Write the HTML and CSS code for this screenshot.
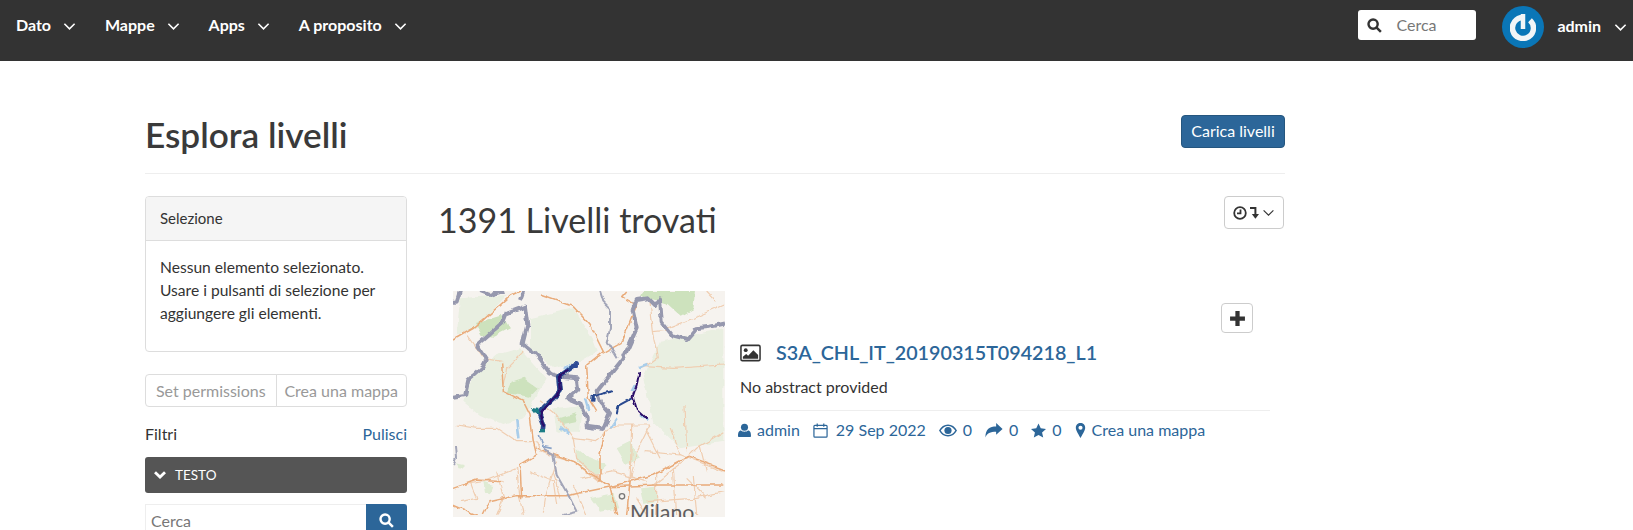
FILE: index.html

```html
<!DOCTYPE html>
<html lang="it">
<head>
    <meta charset="UTF-8">
    <meta name="viewport" content="width=device-width, initial-scale=1.0">
    <title>Esplora livelli</title>
    <link rel="stylesheet" href="styles.css">
</head>
<body>
    <nav class="topbar">
        <ul class="menu">
            <li>Dato <svg class="chev" viewBox="0 0 14 9"><path d="M1.500 1.500 7 7l5.500-5.500"/></svg></li>
            <li>Mappe <svg class="chev" viewBox="0 0 14 9"><path d="M1.500 1.500 7 7l5.500-5.500"/></svg></li>
            <li>Apps <svg class="chev" viewBox="0 0 14 9"><path d="M1.500 1.500 7 7l5.500-5.500"/></svg></li>
            <li>A proposito <svg class="chev" viewBox="0 0 14 9"><path d="M1.500 1.500 7 7l5.500-5.500"/></svg></li>
        </ul>
        <div class="top-search">
            <svg class="search-icon dark" viewBox="0 0 16 16"><circle cx="6.500" cy="6.500" r="4.900"/><path d="m10 10 4.800 4.800"/></svg>
            <span>Cerca</span>
        </div>
        <svg class="avatar" viewBox="0 0 42 42">
            <defs><filter id="soft"><feGaussianBlur stdDeviation="0.600"/></filter></defs>
            <circle cx="21" cy="21" r="21" fill="#0a76b7"/>
            <g fill="none" stroke="#f2f5f7" filter="url(#soft)">
                <path stroke-width="5.500" d="M21 11.500a10.500 10.500 0 1 0 7 2.700"/>
                <path stroke-width="4.500" d="M21 8v15"/>
            </g>
        </svg>
        <div class="user">admin <svg class="chev" viewBox="0 0 14 9"><path d="M1.500 1.500 7 7l5.500-5.500"/></svg></div>
    </nav>

    <div class="container">
        <header class="page-head">
            <h1>Esplora livelli</h1>
            <a class="btn-upload">Carica livelli</a>
        </header>

        <div class="columns">
            <aside class="sidebar">
                <div class="panel">
                    <div class="panel-head">Selezione</div>
                    <div class="panel-body">Nessun elemento selezionato. Usare i pulsanti di selezione per aggiungere gli elementi.</div>
                </div>
                <div class="btn-pair">
                    <span>Set permissions</span>
                    <span>Crea una mappa</span>
                </div>
                <div class="filter-head">
                    <span>Filtri</span>
                    <a>Pulisci</a>
                </div>
                <div class="filter-bar">
                    <svg viewBox="0 0 14 10"><path d="M2 2.200 7 7l5-4.800"/></svg>
                    TESTO
                </div>
                <div class="side-search">
                    <span>Cerca</span>
                    <div class="side-search-btn">
                        <svg class="search-icon" viewBox="0 0 16 16"><circle cx="6.500" cy="6.500" r="4.900"/><path d="m10 10 4.800 4.800"/></svg>
                    </div>
                </div>
            </aside>

            <main class="results">
                <div class="results-head">
                    <h2>1391 Livelli trovati</h2>
                    <div class="sort-btn">
                        <svg class="sort-clock" viewBox="0 0 14 14"><circle cx="7" cy="7" r="5.800"/><path d="M7.500 3.500v3.800H4"/></svg>
                        <svg class="sort-arrow" viewBox="0 0 10 14"><path d="M0 1.500h6v7"/><path class="tip" d="M2 8h8l-4 5.500z"/></svg>
                        <svg class="chev-thin" viewBox="0 0 14 9"><path d="M1.500 1.500 7 7l5.500-5.500"/></svg>
                    </div>
                </div>

                <article class="item">
                    <div class="thumb">
                        <svg viewBox="39 18 816 678" preserveAspectRatio="none">
                            <defs>
                                <filter id="rough" x="0" y="0" width="100%" height="100%">
                                    <feTurbulence type="fractalNoise" baseFrequency="0.035" numOctaves="2" seed="4"/>
                                    <feDisplacementMap in="SourceGraphic" scale="16" xChannelSelector="R" yChannelSelector="G"/>
                                    <feGaussianBlur stdDeviation="2"/>
                                </filter>
                            </defs>
                            <rect x="39" y="18" width="816" height="678" fill="#f6f3ef"/>
                            <g filter="url(#rough)">
                                <!-- pale woods -->
                                <g fill="#e9efe1">
                                    <path d="M270 100 400 70 455 160 470 200 420 230 340 250 270 190z"/>
                                    <path d="M660 170 760 150 850 130 850 470 720 490 640 410 610 280z"/>
                                    <path d="M100 270 170 210 240 190 320 280 290 330 250 400 190 420 120 390 70 350z"/>
                                    <path d="M340 370 430 360 420 440 350 440z"/>
                                    <path d="M60 40 200 30 110 130 50 150z"/>
                                </g>
                                <g fill="#dfeBd3">
                                    <path d="M410 490 450 520 500 540 470 570 410 530z"/>
                                    <path d="M530 490 570 470 600 520 560 540z"/>
                                    <path d="M450 640 520 625 535 670 480 680z"/>
                                    <path d="M600 610 650 605 650 650 610 660z"/>
                                    <path d="M130 590 160 600 150 625 135 620z"/>
                                    <path d="M45 535 75 540 60 555z"/>
                                </g>
                                <g fill="#cde2bd">
                                    <path d="M105 115 185 90 210 130 160 155 125 150z"/>
                                    <path d="M215 290 250 278 295 310 270 335 200 325z"/>
                                    <path d="M358 400 405 385 410 412 370 420z"/>
                                    <path d="M610 18 765 18 760 75 725 95 680 55 600 32z"/>
                                </g>
                                <!-- roads -->
                                <g fill="none" stroke="#f0cdb0" stroke-width="3.500">
                                    <path d="M50 420 110 430 170 430 230 470 290 470 300 500"/>
                                    <path d="M400 460 410 520 500 600M480 520 480 590M575 420 570 600M630 420 590 500 570 590M495 440 530 420 630 420"/>
                                    <path d="M735 360 740 500M850 440 770 490 740 520 640 600M620 500 720 510 850 560M690 430 720 510"/>
                                    <path d="M60 600 130 590 230 550 240 640 250 690M650 560 650 690M700 550 710 690M760 570 770 690"/>
                                    <path d="M300 500 400 530 480 590M340 560 360 640M400 600 440 690M350 530 320 620 310 680"/>
                                    <path d="M640 140 655 215 610 250M610 245 700 250 850 240M630 50 640 140 690 135M80 150 130 220 190 230"/>
                                    <path d="M400 460 470 470 495 440M420 580 520 560 620 590M620 650 760 640 850 620M90 590 110 640 60 650"/>
                                    <path d="M680 130 760 100 850 60M800 18 830 50M250 200 200 250 190 300M300 350 340 380 400 460M620 440 660 520M780 480 800 560"/>
                                    <path d="M170 560 190 640 170 690M270 560 340 590 350 660M590 640 620 690M740 580 800 640"/>
                                </g>
                                <g fill="none" stroke="#e9ab7a" stroke-width="4.500">
                                    <path d="M39 165 100 130 215 30 240 18"/>
                                    <path d="M300 30 400 65 450 120 490 200 440 240 445 340 470 380"/>
                                    <path d="M490 205 545 175 590 60 545 35 560 18"/>
                                    <path d="M185 235 190 320 250 350 270 390 280 470 290 510 240 540 245 640"/>
                                    <path d="M290 490 400 530 510 605"/>
                                    <path d="M130 690 150 650 230 632 380 632 510 605 640 570 745 515 855 555"/>
                                    <path d="M39 660 110 690M39 610 110 585 190 590M510 605 530 690M570 590 560 690"/>
                                    <path d="M510 605 650 600 850 600M495 440 480 510 480 590"/>
                                </g>
                                <!-- borders -->
                                <g fill="none" stroke="#9698ae" stroke-width="12" stroke-linejoin="round">
                                    <path d="M39 335 75 330 85 285 130 245 140 225 110 180 190 110 200 85 255 65 262 120 248 175 285 205 330 265 360 275 410 280 415 315 385 340 420 355 440 400 440 425 490 432 510 385 480 350 470 320 510 270 550 220 590 130 578 75 590 45 625 40 645 60 660 40 665 110 700 155 740 165 770 130 810 125 855 115"/>
                                    <path d="M120 18 150 30 190 18M250 18 240 45M60 18 50 50 39 50"/>
                                </g>
                                <g fill="none" stroke="#a2a5b8" stroke-width="6" stroke-linejoin="round">
                                    <path d="M480 18 490 50 510 70 510 130 500 170 530 220"/>
                                    <path d="M45 480 48 520 39 540"/>
                                    <path d="M310 490 340 510 350 570 390 640 410 680 370 690"/>
                                </g>
                                <!-- lakes and raster -->
                                <g fill="none" stroke="#a9cdea" stroke-width="8">
                                    <path d="M232 405 238 460"/>
                                    <path d="M360 425 385 445"/>
                                    <path d="M370 250 395 240"/>
                                    <path d="M600 250 625 240"/>
                                    <path d="M575 320 585 300M435 340 445 375"/>
                                    <path d="M510 430 530 400M600 390 625 408"/>
                                </g>
                                <g fill="none" stroke="#29498f" stroke-width="14" stroke-linejoin="round">
                                    <path d="M405 240 375 262 358 275 362 315 340 340 310 368 297 385 310 420 308 438"/>
                                    <path d="M460 335 490 325 520 318" stroke-width="6"/>
                                    <path d="M460 330 458 350" stroke-width="10"/>
                                    <path d="M530 385 535 362 575 340" stroke-width="6"/>
                                </g>
                                <g fill="none" stroke="#2c0f6a" stroke-width="7">
                                    <path d="M385 255 360 275 362 315 330 350 300 390 312 425"/>
                                    <path d="M598 262 590 300 578 335 590 375 622 405" stroke-width="6"/>
                                </g>
                                <circle cx="405" cy="240" r="9" fill="#2f4c95"/>
                                <path d="M272 368 295 372 300 392 285 385z" fill="#1f7d86"/>
                                <path d="M300 432h18v10h-18z" fill="#1f7d86"/>
                                <path d="M298 450 310 485 335 490" fill="none" stroke="#8aa3c8" stroke-width="5"/>
                            </g>
                            <circle cx="546" cy="634" r="8" fill="none" stroke="#777" stroke-width="4"/>
                            <text x="570" y="706" class="map-label">Milano</text>
                        </svg>
                    </div>
                    <div class="item-body">
                        <div class="add-row">
                            <div class="add-btn"><svg viewBox="0 0 16 16"><path d="M6 1h4v5h5v4h-5v5H6v-5H1V6h5z"/></svg></div>
                        </div>
                        <h4 class="item-title">
                            <svg viewBox="0 0 22 18"><rect x="1" y="1" width="20" height="16" rx="1.500" fill="#fff" stroke="#333" stroke-width="1.600"/><circle cx="6" cy="6" r="2" fill="#333"/><path d="M3 15v-2l3.500-3 2 2 5.500-6 5 5v4z" fill="#333"/></svg>
                            <a>S3A_CHL_IT_20190315T094218_L1</a>
                        </h4>
                        <p class="abstract">No abstract provided</p>
                        <ul class="meta">
                            <li><svg class="ic-user" viewBox="0 0 14 16"><circle cx="7" cy="4.500" r="3.800"/><path d="M1 15c-.5 0-1-.5-1-1.200C0 10.500.8 8 3.200 8c1 .8 2.300 1.300 3.800 1.300S9.800 8.800 10.800 8C13.200 8 14 10.500 14 13.800c0 .7-.5 1.200-1 1.200z"/></svg>admin</li>
                            <li><svg class="outline" viewBox="0 0 16 16"><rect x="1" y="2.500" width="14" height="12.500" rx="1"/><path d="M1 6h14M4.500 .5v3.500M11.500 .5v3.500"/></svg>29 Sep 2022</li>
                            <li><svg class="ic-wide" viewBox="0 0 18 12"><path fill-rule="evenodd" d="M9 0C5.200 0 2 2.300 0 6c2 3.700 5.200 6 9 6s7-2.300 9-6c-2-3.700-5.200-6-9-6zM9 1.400c2.900 0 5.500 1.700 7.300 4.600C14.500 8.900 11.900 10.600 9 10.600S3.500 8.900 1.700 6C3.500 3.100 6.100 1.400 9 1.400z"/><circle cx="9" cy="6" r="3.600"/></svg>0</li>
                            <li><svg class="ic-wide" viewBox="0 0 16 14"><path d="M16 5.500 10 0v3.200C4 3.200 0 5.500 0 13.500c1.500-4 4.500-5.400 10-5.400V11z"/></svg>0</li>
                            <li><svg viewBox="0 0 16 15"><path d="m8 0 2.400 5.200 5.600.6-4.200 3.800 1.200 5.400L8 12.200 3 15l1.200-5.400L0 5.800l5.600-.6z"/></svg>0</li>
                            <li><svg class="ic-pin" viewBox="0 0 10 16"><path fill-rule="evenodd" d="M5 0C2.200 0 0 2.200 0 5c0 3 3.500 8 5 11 1.500-3 5-8 5-11 0-2.800-2.200-5-5-5zm0 2.800a2.200 2.200 0 1 1 0 4.400 2.200 2.200 0 0 1 0-4.400z"/></svg>Crea una mappa</li>
                        </ul>
                    </div>
                </article>
            </main>
        </div>
    </div>
</body>
</html>
```

FILE: styles.css

```css
* {
    box-sizing: border-box;
}

html, body {
    height: 530px;
    overflow: hidden;
}

body {
    margin: 0;
    font-family: Lato, sans-serif;
    font-size: 16px;
    line-height: 1.5;
    color: #333;
    background: #fff;
}

a {
    color: #2c6699;
}

ul {
    list-style: none;
    margin: 0;
    padding: 0;
}

.topbar {
    display: flex;
    align-items: center;
    height: 61px;
    padding: 0 6px 0 16px;
    background: #333;
    color: #fff;
    font-weight: 700;
    font-size: 16px;
}

.menu {
    display: flex;
    gap: 29px;
    margin-right: auto;
    margin-top: -12px;
}

.chev {
    width: 13px;
    height: 9px;
    margin-left: 8px;
    fill: none;
    stroke: #fff;
    stroke-width: 1.700;
}

.top-search {
    display: flex;
    align-items: center;
    gap: 14px;
    width: 118px;
    height: 30px;
    padding-left: 9px;
    margin-top: -11px;
    background: #fff;
    border-radius: 3px;
    color: #777;
    font-weight: 400;
    font-size: 16px;
}

.search-icon {
    width: 15px;
    height: 15px;
    fill: none;
    stroke: #fff;
    stroke-width: 2.600;
}

.search-icon.dark {
    stroke: #333;
}

.avatar {
    width: 42px;
    height: 42px;
    margin: -7px 13px 0 26px;
}

.user {
    margin-top: -10px;
}

.user .chev {
    margin-left: 9px;
}

.container {
    width: 1140px;
    margin-left: 145px;
}

.page-head {
    display: flex;
    justify-content: space-between;
    align-items: center;
    height: 113px;
    padding-top: 28px;
    border-bottom: 1px solid #eee;
}

h1 {
    margin: 0;
    padding-top: 7px;
    font-size: 35.200px;
    font-weight: 600;
    line-height: 1.1;
    color: #3a3a3a;
}

.btn-upload {
    height: 33px;
    width: 104px;
    background: #2c6699;
    border: 1px solid #25567f;
    border-radius: 4px;
    color: #fff;
    text-align: center;
    line-height: 29px;
}

.columns {
    display: flex;
    padding-top: 22px;
}

.sidebar {
    width: 262px;
    flex: none;
}

.panel {
    height: 156px;
    border: 1px solid #ddd;
    border-radius: 4px;
}

.panel-head {
    height: 44px;
    padding: 10px 14px;
    background: #f5f5f5;
    border-bottom: 1px solid #ddd;
    border-radius: 3px 3px 0 0;
    font-size: 15px;
}

.panel-body {
    padding: 15px 14px;
    font-size: 15.600px;
    line-height: 23px;
}

.btn-pair {
    display: flex;
    height: 33px;
    margin-top: 22px;
    color: #999;
    text-align: center;
    line-height: 31px;
}

.btn-pair span {
    flex: 1;
    white-space: nowrap;
    border: 1px solid #ddd;
    border-radius: 4px 0 0 4px;
}

.btn-pair span + span {
    margin-left: -1px;
    border-radius: 0 4px 4px 0;
}

.filter-head {
    display: flex;
    justify-content: space-between;
    margin-top: 15px;
    line-height: 24px;
}

.filter-bar {
    display: flex;
    align-items: center;
    gap: 8px;
    height: 36px;
    margin-top: 11px;
    padding-left: 8px;
    background: #555;
    border-radius: 3px;
    color: #fff;
    font-size: 13.500px;
}

.filter-bar svg {
    width: 14px;
    height: 10px;
    fill: none;
    stroke: #fff;
    stroke-width: 2.800;
}

.side-search {
    display: flex;
    justify-content: space-between;
    height: 34px;
    margin-top: 11px;
    padding-left: 5px;
    border: 1px solid #eee;
    border-right: 0;
    color: #777;
    line-height: 32px;
}

.side-search-btn {
    display: flex;
    align-items: center;
    justify-content: center;
    width: 41px;
    margin-top: -1px;
    background: #2c6699;
    border-radius: 0 3px 0 0;
}

.results {
    flex: 1;
    margin-left: 31px;
}

.results-head {
    display: flex;
    justify-content: space-between;
    align-items: flex-start;
    padding-right: 1px;
}

h2 {
    margin: 0;
    font-size: 34px;
    font-weight: 400;
    line-height: 48px;
    color: #3a3a3a;
}

.sort-btn {
    display: flex;
    align-items: center;
    justify-content: center;
    gap: 3px;
    width: 60px;
    height: 33px;
    border: 1px solid #ccc;
    border-radius: 4px;
}

.sort-clock {
    width: 14px;
    height: 14px;
    fill: none;
    stroke: #333;
    stroke-width: 1.800;
}

.sort-arrow {
    width: 9px;
    height: 14px;
    fill: none;
    stroke: #333;
    stroke-width: 2.200;
}

.sort-arrow .tip {
    fill: #333;
    stroke: none;
}

.chev-thin {
    width: 13px;
    height: 8px;
    fill: none;
    stroke: #333;
    stroke-width: 1.300;
}

.item {
    display: flex;
    margin-top: 47px;
    padding-left: 15px;
}

.thumb {
    width: 272px;
    height: 226px;
    flex: none;
}

.thumb svg {
    display: block;
    width: 100%;
    height: 100%;
}

.map-label {
    font-size: 64px;
    fill: #5f5f5f;
}

.item-body {
    flex: 1;
    margin-left: 15px;
    margin-right: 15px;
}

.add-row {
    display: flex;
    justify-content: flex-end;
    padding: 12px 17px 0 0;
}

.add-btn {
    display: flex;
    align-items: center;
    justify-content: center;
    width: 32px;
    height: 30px;
    border: 1px solid #ccc;
    border-radius: 4px;
}

.add-btn svg {
    width: 17px;
    height: 17px;
    fill: #333;
}

.item-title {
    display: flex;
    align-items: center;
    gap: 15px;
    margin: 6px 0 0;
    font-size: 19.700px;
    font-weight: 600;
    line-height: 28px;
}

.item-title svg {
    width: 21px;
    height: 18px;
}

.abstract {
    margin: 8px 0 0;
    padding-bottom: 11px;
    border-bottom: 1px solid #eee;
    line-height: 24px;
}

.meta {
    display: flex;
    gap: 13px;
    margin: 8px 0 0 -2px;
    color: #2c6699;
    line-height: 22px;
}

.meta li {
    display: flex;
    align-items: center;
    gap: 6px;
}

.meta li:nth-child(2) {
    gap: 8px;
}

.meta svg {
    height: 15px;
    width: 15px;
    fill: #2c6699;
}

.meta .ic-user {
    width: 13px;
}

.meta .ic-wide {
    width: 18px;
}

.meta .ic-pin {
    width: 11px;
}

.meta svg.outline {
    fill: none;
    stroke: #2c6699;
    stroke-width: 1.300;
}
```
